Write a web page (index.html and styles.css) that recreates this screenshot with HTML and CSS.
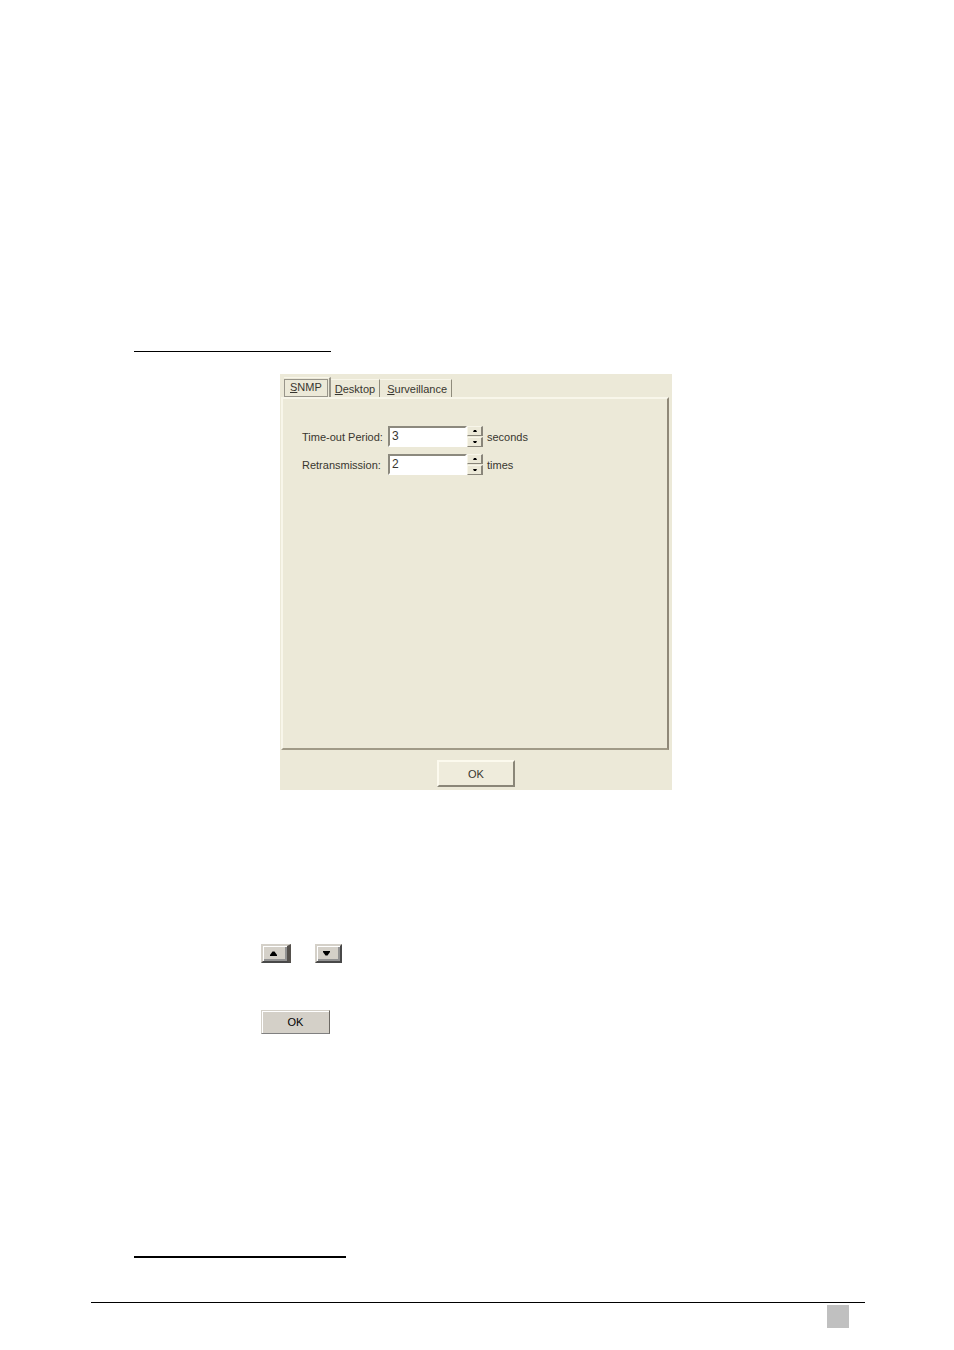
FILE: index.html
```html
<!DOCTYPE html>
<html lang="en">
<head>
<meta charset="utf-8">
<meta name="viewport" content="width=device-width, initial-scale=1">
<title>SNMP</title>
<link rel="stylesheet" href="styles.css">
</head>
<body>
<main class="page">
  <hr class="rule">
  <form class="dialog">
    <div class="tabs" role="tablist">
      <button type="button" class="tab tab-active" role="tab" aria-selected="true"><span class="focus"><u>S</u>NMP</span></button>
      <button type="button" class="tab" role="tab"><u>D</u>esktop</button>
      <button type="button" class="tab tab-last" role="tab"><u>S</u>urveillance</button>
    </div>
    <div class="panel" role="tabpanel">
      <div class="field">
        <label class="name" for="timeout">Time-out Period:</label>
        <input class="value" id="timeout" type="text" value="3">
        <span class="spinner">
          <button type="button" class="spin" aria-label="Increase time-out"><svg viewBox="0 0 4 2" width="4" height="2"><path d="M0 2 1 0h2l1 2z"/></svg></button>
          <button type="button" class="spin" aria-label="Decrease time-out"><svg viewBox="0 0 4 2" width="4" height="2"><path d="M0 0h4L3 2H1z"/></svg></button>
        </span>
        <span class="unit">seconds</span>
      </div>
      <div class="field">
        <label class="name" for="retries">Retransmission:</label>
        <input class="value" id="retries" type="text" value="2">
        <span class="spinner">
          <button type="button" class="spin" aria-label="Increase retransmission"><svg viewBox="0 0 4 2" width="4" height="2"><path d="M0 2 1 0h2l1 2z"/></svg></button>
          <button type="button" class="spin" aria-label="Decrease retransmission"><svg viewBox="0 0 4 2" width="4" height="2"><path d="M0 0h4L3 2H1z"/></svg></button>
        </span>
        <span class="unit">times</span>
      </div>
    </div>
    <button type="button" class="ok">OK</button>
  </form>
  <section class="samples">
    <div class="arrows">
      <button type="button" class="arrow arrow-up" aria-label="Up"><svg viewBox="0 0 7 5" width="7" height="5"><path d="M0 5V4L2.500.5h2L7 4v1z"/></svg></button>
      <button type="button" class="arrow" aria-label="Down"><svg viewBox="0 0 7 5" width="7" height="5"><path d="M0 0v1l2.500 3.500h2L7 1V0z"/></svg></button>
    </div>
    <button type="button" class="sample-ok">OK</button>
  </section>
  <hr class="rule rule-thick">
</main>
<footer class="footer"><span class="page-box"></span></footer>
</body>
</html>
```
FILE: styles.css
```css
* {
  box-sizing: border-box;
}

body {
  margin: 0;
  background: #fff;
  color: #38362f;
  font: 11px/14px "Liberation Sans", Arial, sans-serif;
}

button,
input {
  margin: 0;
  padding: 0;
  border: 0;
  border-radius: 0;
  color: inherit;
  font: inherit;
}

.page {
  padding: 351px 134px 0;
}

.rule {
  width: 197px;
  height: 1px;
  margin: 0;
  border: 0;
  background: #000;
}

.rule-thick {
  width: 212px;
  height: 2px;
  margin-top: 222px;
}

.dialog {
  display: flex;
  flex-direction: column;
  width: 392px;
  max-width: 100%;
  margin: 22px 0 0 146px;
  padding: 3px 3px 3px 1px;
  background: #ece9d8;
}

.tabs {
  display: flex;
  align-items: flex-end;
  height: 20px;
  padding-left: 3px;
}

.tab {
  height: 18px;
  padding: 0 4px;
  border-top: 1px solid #f8f6ea;
  border-right: 1px solid #8f8b7c;
  background: transparent;
}

.tab-active {
  height: 20px;
  padding: 0 1px 0 0;
  border-right: 2px solid #99968a;
}

.tab-last {
  padding: 0 4px 0 7px;
}

.focus {
  display: block;
  height: 18px;
  padding: 0 5px;
  border: 1px solid #98958a;
}

.panel {
  display: flex;
  flex-direction: column;
  gap: 7px;
  min-height: 353px;
  padding: 27px 19px;
  border: 2px solid;
  border-color: #f8f6ea #8f8878 #a09a87 #f8f6ea;
}

.field {
  display: flex;
  align-items: center;
  height: 21px;
}

.name {
  width: 86px;
}

.value {
  width: 79px;
  height: 21px;
  padding: 0 2px 2px;
  border: 2px solid;
  border-color: #8c897e #fff #fff #8c897e;
  background: #fff;
  font-size: 12px;
}

.spinner {
  display: flex;
  flex-direction: column;
  gap: 1px;
  width: 16px;
  margin-right: 4px;
}

.spin {
  display: flex;
  align-items: center;
  justify-content: center;
  height: 10px;
  border: 1px solid;
  border-color: #f8f6ea #89857a #89857a #f8f6ea;
  border-right-width: 2px;
  background: #ece9d8;
}

.ok {
  align-self: center;
  width: 78px;
  height: 27px;
  margin: 10px 0 0 2px;
  border: 2px solid;
  border-color: #fcfaee #8a8678 #8a8678 #fcfaee;
  background: #efecdc;
  font-size: 11px;
}

.samples {
  display: flex;
  flex-direction: column;
  gap: 47px;
  margin: 154px 0 0 127px;
}

.arrows {
  display: flex;
  gap: 24px;
}

.arrow {
  display: flex;
  align-items: center;
  justify-content: center;
  width: 27px;
  height: 19px;
  padding: 0 4px 1px 0;
  border: 2px solid;
  border-color: #d4d0c8 #484848 #484848 #d4d0c8;
  background: #d4d0c8;
  box-shadow: inset 1px 1px #fff, inset -2px -2px #929292;
  color: #000;
}

.arrow-up {
  width: 30px;
  border-right-width: 4px;
  border-right-color: #55514d;
}

.sample-ok {
  width: 69px;
  height: 24px;
  border: 1px solid;
  border-color: #d4d0c8 #6c6964 #808080 #d4d0c8;
  background: #d4d0c8;
  box-shadow: inset 1px 1px #fff;
  color: #000;
}

.footer {
  display: flex;
  justify-content: flex-end;
  margin: 44px 89px 0 91px;
  padding: 2px 16px 22px 0;
  border-top: 1px solid #000;
}

.page-box {
  width: 22px;
  height: 23px;
  background: #c0c0c0;
}
```
